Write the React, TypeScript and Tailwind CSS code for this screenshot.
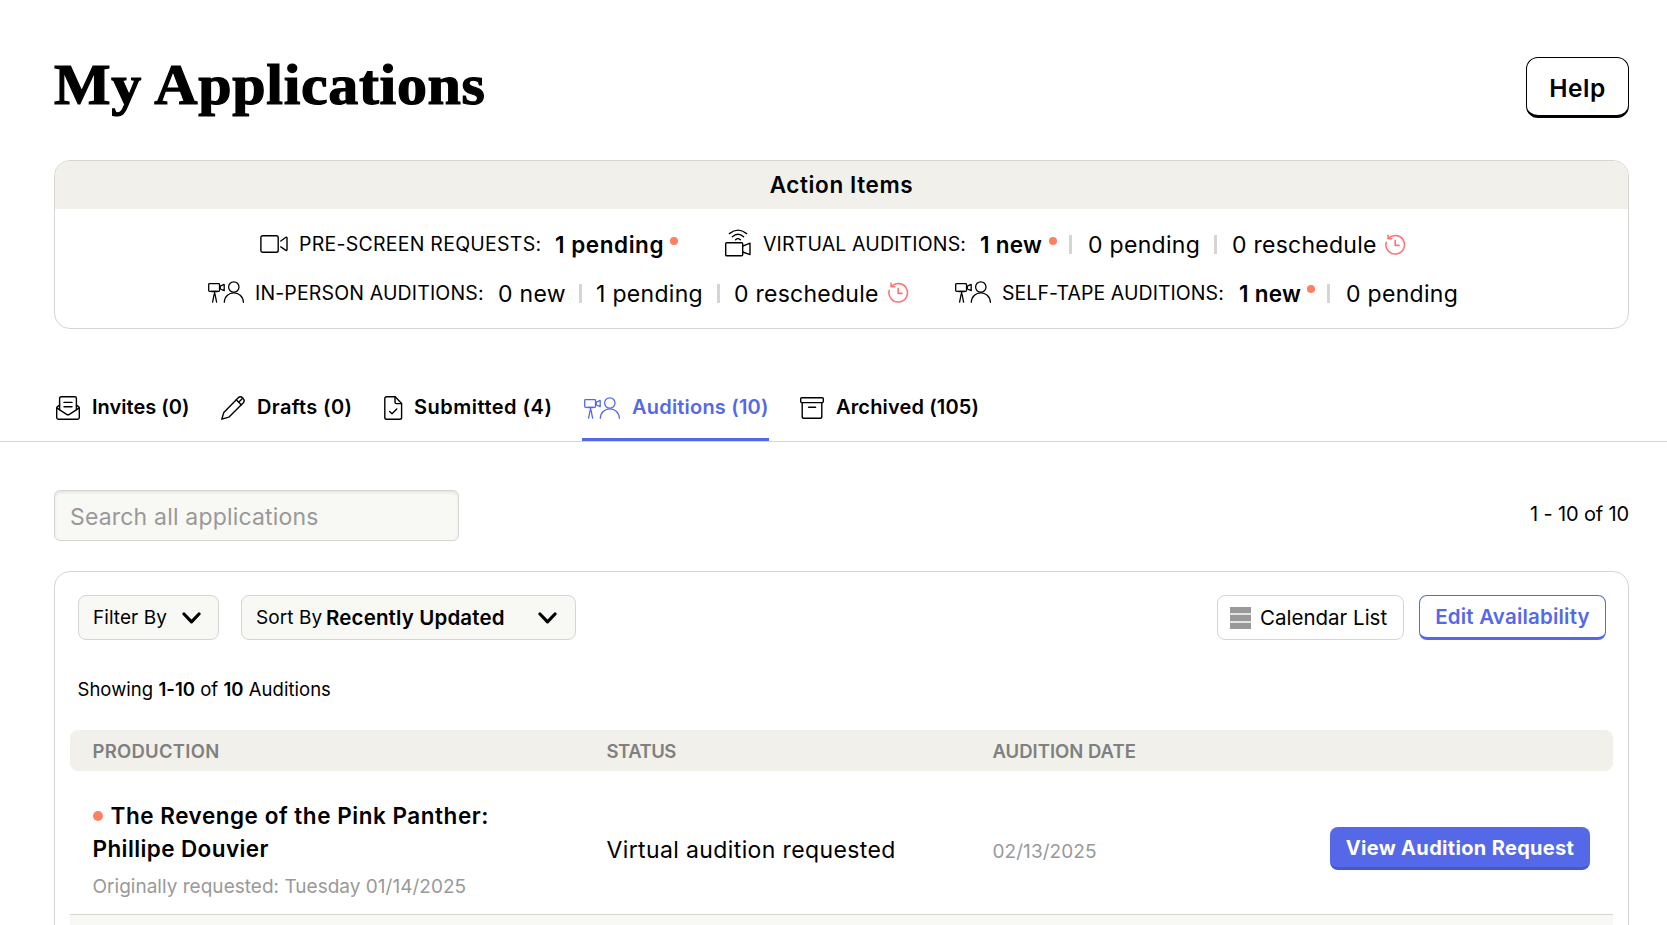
import clsx from "clsx";
import { ReactNode } from "react";

type IconProps = { className?: string };

function VideoIcon({ className }: IconProps) {
  return (
    <svg className={className} width="28" height="18" viewBox="0 0 28 18" fill="none" stroke="currentColor" strokeWidth="1.4" strokeLinecap="round" strokeLinejoin="round">
      <rect x="0.9" y="0.7" width="17.3" height="16.6" rx="1.8" />
      <path d="M20.8 6 L25.9 2.3 Q27 1.8 27 3 V14.6 Q27 15.8 25.9 15.3 L20.8 11.8" />
    </svg>
  );
}

function VirtualIcon({ className }: IconProps) {
  return (
    <svg className={className} width="26" height="28" viewBox="0 0 26 28" fill="none" stroke="currentColor" strokeWidth="1.4" strokeLinecap="round" strokeLinejoin="round">
      <rect x="0.7" y="13.7" width="17" height="13" rx="1" />
      <path d="M17.7 17.2 L25 14.2 V25.6 L17.7 23" />
      <path d="M4.4 4.6 Q13 -2.4 21.6 4.6 M7.4 7.8 Q13 2.8 18.6 7.8 M10.6 10.8 Q13 8.4 15.4 10.8" />
    </svg>
  );
}

function AuditionIcon({ className }: IconProps) {
  return (
    <svg className={className} width="37" height="22" viewBox="0 0 37 22" fill="none" stroke="currentColor" strokeWidth="1.3" strokeLinecap="round" strokeLinejoin="round">
      <rect x="0.7" y="2.7" width="10.8" height="7.6" rx="0.8" />
      <path d="M12.3 5.2 L16.2 3.4 V9.7 L12.3 8 Z" />
      <path d="M3.6 10.5 H9.4 M6.6 10.5 V13.5 M6.2 13 L4.6 21.2 M7 13 L8.6 21.2" />
      <circle cx="25.8" cy="6" r="5.2" />
      <path d="M16.3 21.3 C16.8 8.6 34.8 8.6 35.4 21.3" />
    </svg>
  );
}

function RescheduleIcon({ className }: IconProps) {
  return (
    <svg className={className} width="21" height="21" viewBox="0 0 21 21" fill="none" stroke="currentColor" strokeWidth="1.6" strokeLinecap="round" strokeLinejoin="round">
      <path d="M3.6 4.2 A9.3 9.3 0 1 1 1.2 8.4" />
      <path d="M3.1 1.2 V4.7 H6.8" />
      <path d="M10.2 6.3 V11.4 H14" />
    </svg>
  );
}

function InvitesIcon() {
  return (
    <svg width="24" height="24" viewBox="0 0 24 24" fill="none" stroke="currentColor" strokeWidth="1.4" strokeLinecap="round" strokeLinejoin="round">
      <path d="M3.6 13.6 V2.4 Q3.6 0.8 5.2 0.8 H18.8 Q20.4 0.8 20.4 2.4 V13.6" />
      <path d="M3.6 9 L1.3 10.9 Q0.7 11.4 0.7 12.2 V21.6 Q0.7 23.3 2.4 23.3 H21.6 Q23.3 23.3 23.3 21.6 V12.2 Q23.3 11.4 22.7 10.9 L20.4 9" />
      <path d="M1 12.2 L10.6 18.3 Q12 19.2 13.4 18.3 L23 12.2" />
      <path d="M8 6.4 H16 M8 10.8 H16" />
    </svg>
  );
}

function DraftsIcon() {
  return (
    <svg width="24" height="24" viewBox="0 0 24 24" fill="none" stroke="currentColor" strokeWidth="1.4" strokeLinecap="round" strokeLinejoin="round">
      <path d="M0.8 23.2 L2.8 16.4 L17 1.9 Q19.2 -0.2 21.7 1.9 Q24.4 4.4 22.3 6.8 L7.8 21.2 Z" />
      <path d="M15.2 3.8 L20.2 8.8 M17.6 6.2 L21.2 2.8" />
    </svg>
  );
}

function SubmittedIcon() {
  return (
    <svg width="19" height="24" viewBox="0 0 19 24" fill="none" stroke="currentColor" strokeWidth="1.4" strokeLinecap="round" strokeLinejoin="round">
      <path d="M11.2 0.8 H2.6 Q0.8 0.8 0.8 2.6 V21.4 Q0.8 23.2 2.6 23.2 H15.8 Q17.6 23.2 17.6 21.4 V7.4 Z" />
      <path d="M11 0.9 V6.2 Q11 7.6 12.4 7.6 H17.5" />
      <path d="M5.6 15.6 L8 17.8 L12.8 13" />
    </svg>
  );
}

function ArchivedIcon() {
  return (
    <svg width="24" height="22" viewBox="0 0 24 22" fill="none" stroke="currentColor" strokeWidth="1.4" strokeLinecap="round" strokeLinejoin="round">
      <rect x="0.7" y="0.7" width="22.6" height="4.9" rx="1" />
      <path d="M2.2 5.8 V19.4 Q2.2 21.3 4.1 21.3 H19.9 Q21.8 21.3 21.8 19.4 V5.8" />
      <path d="M8.6 10.2 H15.6" />
    </svg>
  );
}

function Chevron() {
  return (
    <svg className="shrink-0" width="19" height="12" viewBox="0 0 19 12" fill="none" stroke="currentColor" strokeWidth="3.2" strokeLinecap="round" strokeLinejoin="round">
      <path d="M2 2 L9.5 9.8 L17 2" />
    </svg>
  );
}

function Dot({ className }: IconProps) {
  return <span className={clsx("shrink-0 rounded-full bg-[#ff7f61]", className)} />;
}

function Bar({ className }: IconProps) {
  return <span className={clsx("h-[19px] w-[3px] shrink-0 bg-[#d5d5d2]", className)} />;
}

function Label({ className, children }: { className: string; children: ReactNode }) {
  return (
    <span className={clsx("shrink-0 whitespace-nowrap text-[19.5px] leading-[49px] -mt-px", className)}>
      {children}
    </span>
  );
}

function Count({ className, isNew, children }: { className: string; isNew?: boolean; children: ReactNode }) {
  return (
    <span
      className={clsx(
        "shrink-0 whitespace-nowrap leading-[49px]",
        isNew ? "-mt-px text-[22.5px] font-semibold" : "mt-px text-[23px]",
        className
      )}
    >
      {children}
    </span>
  );
}

const tabs = [
  { name: "Invites (0)", icon: <InvitesIcon />, tab: "w-[165px]", gap: "w-9", text: "tracking-[0.03px]" },
  { name: "Drafts (0)", icon: <DraftsIcon />, tab: "w-[163px]", gap: "w-9", text: "tracking-[0.35px]" },
  { name: "Submitted (4)", icon: <SubmittedIcon />, tab: "w-[198px]", gap: "w-[30px]", text: "tracking-[0.5px]" },
  { name: "Auditions (10)", icon: <AuditionIcon />, tab: "w-[187px] mr-[31px]", gap: "w-12", text: "tracking-[0.2px]", active: true },
  { name: "Archived (105)", icon: <ArchivedIcon />, tab: "w-[190px]", gap: "w-9", text: "tracking-[0.15px]" },
];

export default function App() {
  return (
    <div className="h-[925px] w-[1667px] overflow-hidden bg-white font-['Inter','Liberation_Sans',sans-serif] text-black">
      <header className="flex h-[160px] items-start justify-between pl-[54px] pr-[38px] pt-[57px]">
        <h1 className="-mt-[7px] origin-left scale-x-[1.07] whitespace-nowrap font-['Liberation_Serif',serif] text-[56px] font-bold leading-[70px] tracking-[0.65px] [-webkit-text-stroke:1.2px_black]">
          My Applications
        </h1>
        <button className="h-[61px] w-[103px] rounded-xl border border-b-3 border-black pt-1 text-[24.5px] font-semibold tracking-[0.5px]">
          Help
        </button>
      </header>

      <section className="mx-[54px] mr-[38px] h-[169px] overflow-hidden rounded-2xl border border-[#d5d5d2]">
        <h2 className="h-12 bg-[#f1f0eb] text-center text-[22.5px] font-semibold leading-[48px] tracking-[0.6px]">
          Action Items
        </h2>
        <div className="flex h-[49px] mt-[11px] items-center pl-[205px]">
          <VideoIcon className="mr-[11px] -mt-px shrink-0" />
          <Label className="w-64 tracking-[0.25px]">PRE-SCREEN REQUESTS:</Label>
          <Count className="w-[115px] tracking-[0.55px]" isNew>1 pending</Count>
          <Dot className="mr-[47px] -mt-[8px] size-2" />
          <VirtualIcon className="mr-3 -mt-[3px] shrink-0" />
          <Label className="w-[217px] tracking-[0.15px]">VIRTUAL AUDITIONS:</Label>
          <Count className="w-[69px] tracking-[0.3px]" isNew>1 new</Count>
          <Dot className="mr-3 -mt-[8px] size-2" />
          <Bar className="mr-4" />
          <Count className="w-[126px] tracking-[0.3px]">0 pending</Count>
          <Bar className="mr-[15px]" />
          <Count className="w-[153px] tracking-[0.25px]">0 reschedule</Count>
          <RescheduleIcon className="shrink-0 text-[#ff7376]" />
        </div>
        <div className="flex h-[49px] items-center pl-[153px]">
          <AuditionIcon className="mr-[10px] -mt-[4px] shrink-0" />
          <Label className="w-[243px] tracking-[0.15px]">IN-PERSON AUDITIONS:</Label>
          <Count className="w-[81px] tracking-[0.3px]">0 new</Count>
          <Bar className="mr-[14px]" />
          <Count className="w-[121px] tracking-[0.3px]">1 pending</Count>
          <Bar className="mr-[14px]" />
          <Count className="w-[154px] tracking-[0.25px]">0 reschedule</Count>
          <RescheduleIcon className="mr-[46px] -mt-[3px] shrink-0 text-[#ff7376]" />
          <AuditionIcon className="mr-[10px] -mt-[4px] shrink-0" />
          <Label className="w-[237px] tracking-[0.05px]">SELF-TAPE AUDITIONS:</Label>
          <Count className="w-[68px] tracking-[0.3px]" isNew>1 new</Count>
          <Dot className="mr-3 -mt-[9px] size-2" />
          <Bar className="mr-4" />
          <Count className="w-[112px] tracking-[0.3px]">0 pending</Count>
        </div>
      </section>

      <nav className="mt-[50px] flex h-[63px] border-b border-[#d5d5d2] pl-[56px]">
        {tabs.map((e) => (
          <button
            key={e.name}
            className={clsx(
              "flex h-[62px] shrink-0 items-center whitespace-nowrap text-left text-[20px] font-semibold",
              e.active ? "border-b-3 border-[#5569e8] pb-px pl-[2px] text-[#5569e8]" : "pb-[4px]",
              e.tab
            )}
          >
            <span className={clsx("shrink-0", e.gap)}>{e.icon}</span>
            <span className={clsx("-mt-[2px]", e.text)}>{e.name}</span>
          </button>
        ))}
      </nav>

      <div className="mt-12 flex justify-between pl-[54px] pr-[38px]">
        <input
          type="search"
          className="h-[51px] w-[405px] rounded-md border border-[#d5d5d2] bg-[#f8f8f4] px-[15px] pt-[3px] text-[23px] tracking-[0.18px] shadow-[inset_0_2px_3px_rgba(0,0,0,0.08)] placeholder:text-[#999999]"
          placeholder="Search all applications"
        />
        <p className="text-[20px] leading-[49px] tracking-[-0.15px]">1 - 10 of 10</p>
      </div>

      <section className="ml-[54px] mr-[38px] mt-[30px] h-[400px] rounded-2xl border border-[#d5d5d2] px-[15px] pt-[23px]">
        <div className="flex h-[45px] pl-2 pr-[7px]">
          <button className="flex w-[141px] items-center rounded-lg border border-[#d5d5d2] bg-[#f8f8f4] pl-[14px] text-[19px]">
            <span className="w-[89px] shrink-0 pt-[2px] text-left tracking-[0.05px]">Filter By</span>
            <Chevron />
          </button>
          <button className="ml-[22px] flex w-[335px] items-center rounded-lg border border-[#d5d5d2] bg-[#f8f8f4] pl-[14px] text-[19px]">
            <span className="w-[70px] shrink-0 pt-[2px] text-left tracking-[0.1px]">Sort By</span>
            <span className="w-[212px] shrink-0 pt-[2px] text-left text-[20.5px] font-semibold tracking-[0.15px]">Recently Updated</span>
            <Chevron />
          </button>
          <button className="ml-auto flex w-[187px] items-center rounded-lg border border-[#d5d5d2] pl-3 text-[20.5px]">
            <span className="mr-[9px] flex h-[22px] w-[21px] flex-col justify-between bg-[#e3e3e3]">
              <span className="h-[6px] bg-[#999999]" />
              <span className="h-[6px] bg-[#999999]" />
              <span className="h-[6px] bg-[#999999]" />
            </span>
            <span className="pt-[2px]">Calendar List</span>
          </button>
          <button className="ml-[15px] w-[187px] rounded-lg border border-b-3 border-[#5569e8] pt-[2px] text-[20.5px] font-semibold tracking-[0.2px] text-[#5569e8]">
            Edit Availability
          </button>
        </div>

        <p className="mt-[35px] pl-[7.5px] text-[18.5px] leading-[28px] tracking-[0.03px]">
          Showing <b className="font-semibold">1-10</b> of <b className="font-semibold">10</b> Auditions
        </p>

        <div className="mt-[27px] grid h-[41px] grid-cols-[514px_386px_1fr] rounded-lg bg-[#f1f0eb] pl-[22.5px] text-[18.5px] font-semibold leading-[42px] text-[#808080]">
          <span className="tracking-[0.25px]">PRODUCTION</span>
          <span className="tracking-[-0.5px]">STATUS</span>
          <span>AUDITION DATE</span>
        </div>

        <div className="grid h-[144px] grid-cols-[514px_386px_1fr_260px] border-b border-[#d5d5d2] pl-[22.5px] pr-[23px]">
          <div className="pt-[28px]">
            <h3 className="text-[22.5px] font-semibold leading-[33px]">
              <span className="flex items-center whitespace-nowrap tracking-[0.53px]">
                <Dot className="mr-2 size-[10px]" />
                The Revenge of the Pink Panther:
              </span>
              <span className="block tracking-[0.4px]">Phillipe Douvier</span>
            </h3>
            <p className="mt-[8px] text-[19px] leading-[28px] tracking-[0.02px] text-[#999999]">Originally requested: Tuesday 01/14/2025</p>
          </div>
          <span className="pt-[63px] text-[23px] leading-[33px] tracking-[0.38px]">Virtual audition requested</span>
          <span className="pt-[64px] text-[19px] leading-[33px] tracking-[0.06px] text-[#999999]">02/13/2025</span>
          <button className="mt-[56px] h-[43px] rounded-lg border-b-3 border-[#4458d4] bg-[#5569e8] pt-px text-[20px] font-bold tracking-[0.33px] text-white">
            View Audition Request
          </button>
        </div>
        <div className="h-[60px] bg-[#f8f8f4]" />
      </section>
    </div>
  );
}
